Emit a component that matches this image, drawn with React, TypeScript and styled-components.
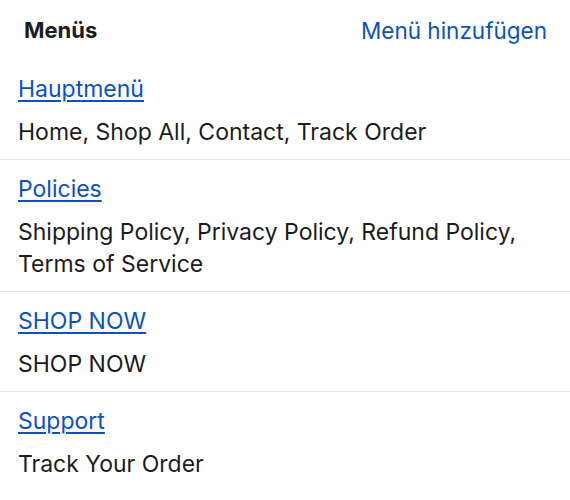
import React from "react";
import styled, { createGlobalStyle } from "styled-components";

const Global = createGlobalStyle`
  html, body { margin: 0; padding: 0; background: #ffffff; }
  body { font-family: Inter, "Noto Sans", sans-serif; -webkit-font-smoothing: antialiased; }
`;

const Page = styled.div`
  width: 570px;
  background: #fff;
`;

const Header = styled.div`
  display: flex;
  align-items: center;
  justify-content: space-between;
  height: 60px;
  padding: 0 23px 0 24px;
`;

const Title = styled.h2`
  margin: 0;
  font-size: 22px;
  font-weight: 700;
  color: #1c1c1c;
`;

const AddButton = styled.button`
  border: none;
  background: none;
  padding: 0;
  font-family: inherit;
  font-size: 22.5px;
  color: #0b52c0;
  cursor: pointer;
`;

const Row = styled.div<{ $last?: boolean }>`
  display: flex;
  flex-direction: column;
  gap: 11px;
  padding: 13px 18px 11px;
  border-bottom: ${(p) => (p.$last ? "none" : "1px solid #e3e3e3")};
`;

const MenuLink = styled.a`
  font-size: 23px;
  line-height: 32px;
  color: #0b52c0;
  text-decoration: underline;
  text-underline-offset: 3px;
  text-decoration-thickness: 1.5px;
  align-self: flex-start;
`;

const Items = styled.div`
  font-size: 23px;
  line-height: 32px;
  color: #1c1c1c;
`;

const menus = [
  { title: "Hauptmenü", items: "Home, Shop All, Contact, Track Order" },
  { title: "Policies", items: "Shipping Policy, Privacy Policy, Refund Policy, Terms of Service" },
  { title: "SHOP NOW", items: "SHOP NOW" },
  { title: "Support", items: "Track Your Order" },
];

export default function App() {
  return (
    <Page>
      <Global />
      <Header>
        <Title>Menüs</Title>
        <AddButton>Menü hinzufügen</AddButton>
      </Header>
      {menus.map((m, i) => (
        <Row key={m.title} $last={i === menus.length - 1}>
          <MenuLink href="#">{m.title}</MenuLink>
          <Items>{m.items}</Items>
        </Row>
      ))}
    </Page>
  );
}
